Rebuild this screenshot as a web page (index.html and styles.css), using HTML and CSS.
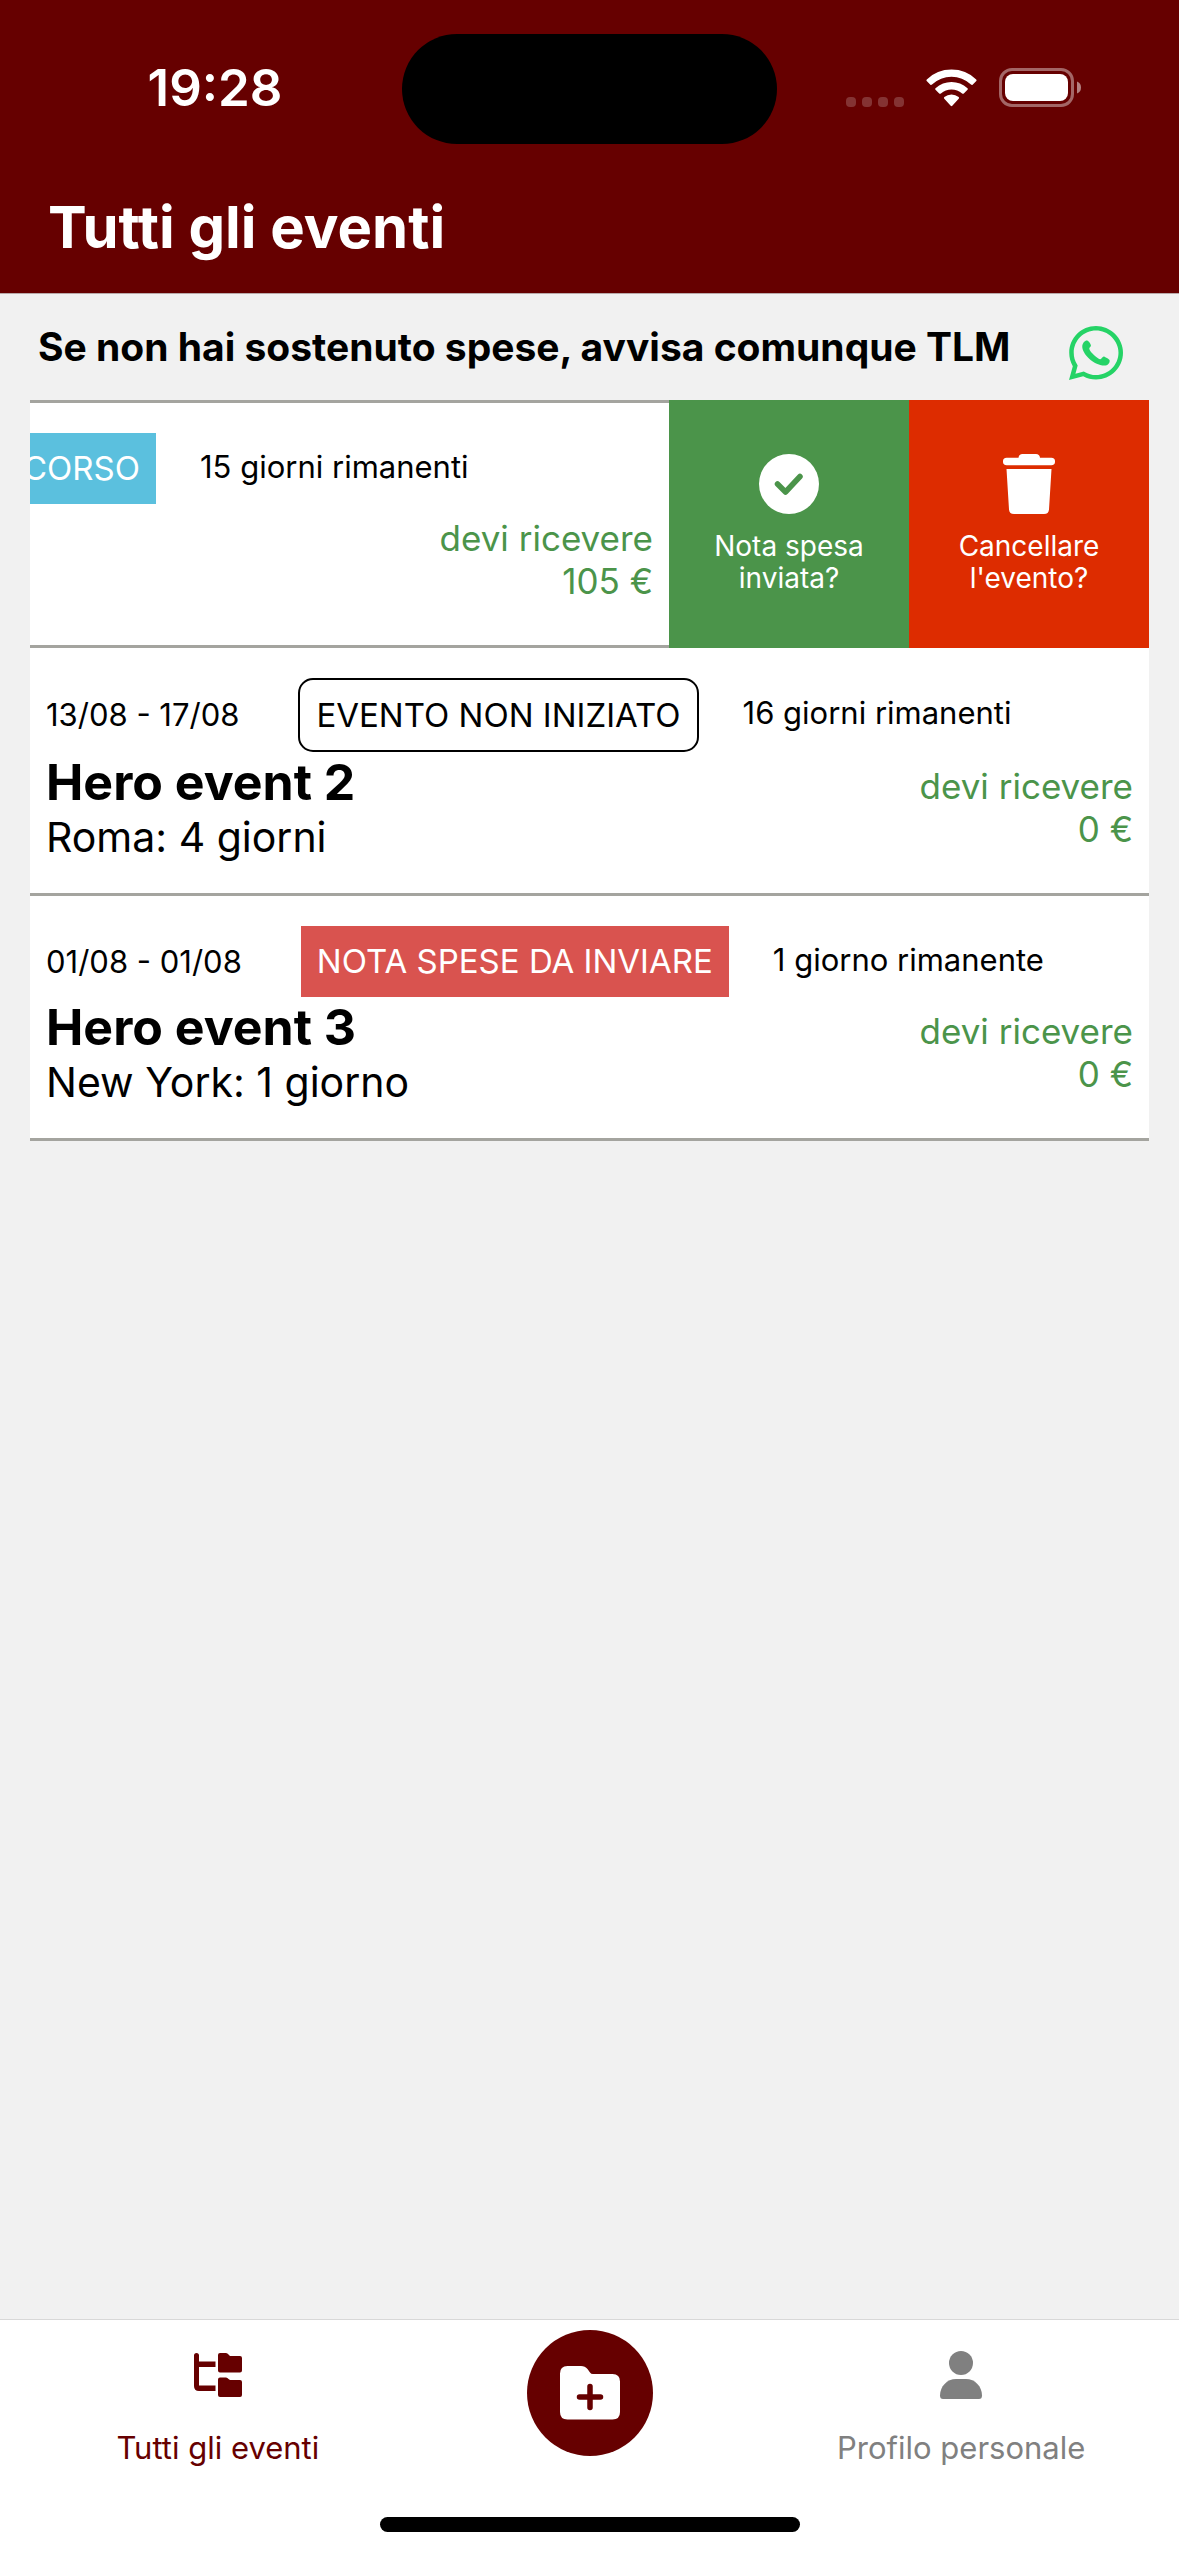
FILE: index.html
```html
<!DOCTYPE html>
<html lang="it">
<head>
<meta charset="utf-8">
<meta name="viewport" content="width=device-width, initial-scale=1">
<title>Tutti gli eventi</title>
<link rel="stylesheet" href="styles.css">
</head>
<body>
<header class="header">
  <div class="status">
    <time class="clock">19:28</time>
    <div class="island"></div>
    <div class="indicators">
      <svg width="58" height="10" viewBox="0 0 58 10" fill="#fff" fill-opacity=".2" aria-hidden="true">
        <rect width="10" height="10" rx="4"/><rect x="16" width="10" height="10" rx="4"/><rect x="32" width="10" height="10" rx="4"/><rect x="48" width="10" height="10" rx="4"/>
      </svg>
      <svg class="wifi" width="51" height="38" viewBox="0 0 51 38" fill="#fff" aria-hidden="true">
        <path d="M0.8 10.4Q11 0.5 25.500.5Q40 0.500 50.200 10.400Q51 11.200 50.300 12L46.600 15.700Q45.900 16.300 45 15.600Q36.500 7.800 25.500 7.800Q14.500 7.800 6 15.600Q5.100 16.300 4.400 15.700L0.700 12Q0 11.200 .8 10.400Z"/>
        <path d="M9.500 19.200Q16.500 13 25.500 13Q34.500 13 41.500 19.200Q42.300 20 41.500 20.800L37.800 24.500Q37 25.200 36.100 24.500Q31.500 20.500 25.500 20.500Q19.500 20.500 14.900 24.500Q14 25.200 13.200 24.500L9.500 20.800Q8.700 20 9.500 19.200Z"/>
        <path d="M18.300 28.100Q21.500 25.600 25.500 25.600Q29.500 25.600 32.700 28.100Q33.500 29 32.700 29.800L26.300 36.800Q25.500 37.500 24.700 36.800L18.300 29.800Q17.500 29 18.300 28.100Z"/>
      </svg>
      <svg width="83" height="39" viewBox="0 0 83 39" fill="#fff" aria-hidden="true">
        <rect x="1.500" y="1.500" width="72" height="36" rx="11.500" fill="none" stroke="#fff" stroke-opacity=".4" stroke-width="3"/>
        <rect x="6" y="6" width="63" height="27" rx="8"/>
        <path d="M78 13.500Q82 15 82 19.500Q82 24 78 25.500Z" fill-opacity=".5"/>
      </svg>
    </div>
  </div>
  <h1 class="title">Tutti gli eventi</h1>
</header>

<main class="main">
  <div class="notice">
    <p class="notice-text">Se non hai sostenuto spese, avvisa comunque TLM</p>
    <a class="whatsapp" href="#whatsapp" aria-label="WhatsApp">
      <svg width="54" height="54" viewBox="0 32 448 448" fill="#25d366" aria-hidden="true">
        <path d="M380.900 97.100C339 55.100 283.200 32 223.900 32c-122.400 0-222 99.600-222 222 0 39.100 10.200 77.300 29.600 111L0 480l117.700-30.900c32.400 17.700 68.900 27 106.100 27h.1c122.300 0 224.100-99.600 224.100-222 0-59.300-25.200-115-67.100-157zm-157 341.600c-33.200 0-65.700-8.900-94-25.700l-6.700-4-69.800 18.300L72 359.200l-4.400-7c-18.500-29.400-28.200-63.300-28.200-98.200 0-101.700 82.800-184.500 184.600-184.500 49.300 0 95.600 19.200 130.400 54.100 34.800 34.900 56.200 81.200 56.100 130.500 0 101.800-84.900 184.600-186.600 184.600z"/>
        <path d="M150 152C135 150 112 170 110 200C108 260 200 360 295 360C320 360 340 342 337 316C335 308 295 286 288 286C278 286 270 308 260 308C240 305 175 250 168 220C168 212 184 202 182 192C180 182 164 154 150 152Z"/>
      </svg>
    </a>
  </div>

  <ul class="events">
    <li class="swipe">
      <article class="event event-open">
        <div class="event-head">
          <div class="clip"><span class="badge badge-info">IN CORSO</span></div>
          <span class="left">15 giorni rimanenti</span>
        </div>
        <div class="event-body">
          <p class="amount">devi ricevere<br>105 €</p>
        </div>
      </article>
      <button class="action action-done" type="button">
        <svg width="60" height="60" viewBox="0 0 60 60" aria-hidden="true"><circle cx="30" cy="30" r="30" fill="#fff"/><path d="M18.500 30L26.500 38L41 22.500" fill="none" stroke="#4b944a" stroke-width="5.500" stroke-linecap="round" stroke-linejoin="round"/></svg>
        <span>Nota spesa<br>inviata?</span>
      </button>
      <button class="action action-delete" type="button">
        <svg width="60" height="60" viewBox="0 0 60 60" fill="#fff" aria-hidden="true"><path d="M7.700 3.700H19.500Q20 0 23.500 0H37Q40.500 0 41 3.700H52.300A3.700 3.700 0 0 1 52.300 11.200H7.700A3.700 3.700 0 0 1 7.700 3.700ZM7.500 15H52.500L50 55.500Q49.600 60 45 60H15Q10.400 60 10 55.500Z"/></svg>
        <span>Cancellare<br>l'evento?</span>
      </button>
    </li>
    <li>
      <article class="event">
        <div class="event-head">
          <span class="date">13/08 - 17/08</span>
          <span class="badge badge-outline">EVENTO NON INIZIATO</span>
          <span class="left">16 giorni rimanenti</span>
        </div>
        <div class="event-body">
          <div>
            <h2 class="name">Hero event 2</h2>
            <p class="place">Roma: 4 giorni</p>
          </div>
          <p class="amount">devi ricevere<br>0 €</p>
        </div>
      </article>
    </li>
    <li>
      <article class="event">
        <div class="event-head">
          <span class="date">01/08 - 01/08</span>
          <span class="badge badge-danger">NOTA SPESE DA INVIARE</span>
          <span class="left">1 giorno rimanente</span>
        </div>
        <div class="event-body">
          <div>
            <h2 class="name">Hero event 3</h2>
            <p class="place">New York: 1 giorno</p>
          </div>
          <p class="amount">devi ricevere<br>0 €</p>
        </div>
      </article>
    </li>
  </ul>
</main>

<footer class="footer">
  <nav class="tabs">
    <a class="tab tab-active" href="#eventi">
      <svg width="54" height="54" viewBox="0 0 54 54" fill="currentColor" aria-hidden="true"><path d="M3 7.500A2.500 2.500 0 0 1 8 7.500V13.500H24.500V19H8V37.500H24.500V43H8Q3 43 3 38ZM29 5H35Q36.500 5 37.500 6.500L39 8H49Q51 8 51 10V22.500Q51 24.500 49 24.500H29Q27 24.500 27 22.500V7Q27 5 29 5ZM29 29.500H35Q36.500 29.500 37.500 31L39 32H49Q51 32 51 34V47Q51 49 49 49H29Q27 49 27 47V31.500Q27 29.500 29 29.500Z"/></svg>
      <span>Tutti gli eventi</span>
    </a>
    <a class="tab" href="#nuovo" aria-label="Nuovo evento">
      <span class="add">
        <svg width="60" height="54" viewBox="0 0 60 54" aria-hidden="true"><path d="M7.500 0H21Q25 0 27.500 3L30 6.500Q31 8 33 8H52.500Q60 8 60 15.500V46Q60 53.500 52.500 53.500H7.500Q0 53.500 0 46V7.500Q0 0 7.500 0Z" fill="#fff"/><path d="M30 20.500V41.500M19.500 31H40.500" stroke="#600" stroke-width="5.500" stroke-linecap="round"/></svg>
      </span>
    </a>
    <a class="tab" href="#profilo">
      <svg width="54" height="54" viewBox="0 0 54 54" fill="currentColor" aria-hidden="true"><circle cx="27" cy="15" r="12"/><path d="M22 31H32C41 31 48 38.500 48 47.500Q48 51 45 51H9Q6 51 6 47.500C6 38.500 13 31 22 31Z"/></svg>
      <span>Profilo personale</span>
    </a>
  </nav>
  <div class="home"></div>
</footer>
</body>
</html>
```
FILE: styles.css
```css
* { box-sizing: border-box; margin: 0; padding: 0; }

body {
  display: flex;
  flex-direction: column;
  min-height: 100vh;
  background: #f1f1f1;
  color: #000;
  font-family: Inter, "Liberation Sans", sans-serif;
}

.header {
  padding-top: 34px;
  background: #600;
  color: #fff;
  border-bottom: 1px solid #b9a9a9;
}
.status {
  display: grid;
  grid-template-columns: 1fr 375px 1fr;
  align-items: center;
  height: 110px;
}
.clock { padding: 0 0 3px 28px; text-align: center; font-size: 51px; line-height: 60px; font-weight: 600; }
.island { height: 110px; border-radius: 55px; background: #000; }
.indicators { display: flex; align-items: flex-end; gap: 22px; padding: 0 0 3px 69px; }
.title { padding: 48px 48px 31px; font-size: 58px; line-height: 70px; font-weight: 700; }

.main { flex: 1; padding: 0 30px; }
.notice {
  display: flex;
  align-items: center;
  justify-content: space-between;
  height: 106px;
  padding: 0 26px 0 8px;
}
.notice-text { font-size: 39px; line-height: 46px; font-weight: 700; }
.whatsapp { display: flex; padding-top: 12px; }

.events { list-style: none; border-top: 3px solid #a4a49f; background: #fff; }
.event { padding: 30px 16px 31px; border-bottom: 3px solid #a4a49f; }
.event-head { display: flex; align-items: center; }
.date { margin-right: 59px; font-size: 31px; line-height: 36px; }
.badge { padding: 16px; font-size: 33px; line-height: 39px; white-space: nowrap; }
.badge-info { background: #5bc0de; color: #fff; }
.badge-danger { background: #d9534f; color: #fff; }
.badge-outline { padding: 16px 16px 15px; border: 2px solid #000; border-radius: 15px; }
.left { margin-left: 44px; font-size: 31px; line-height: 36px; padding-bottom: 4px; }
.event-body { display: flex; align-items: flex-start; justify-content: space-between; min-height: 110px; }
.name { font-size: 50px; line-height: 60px; font-weight: 700; }
.place { font-size: 41px; line-height: 50px; }
.amount { margin-left: auto; padding-top: 13px; color: #4b944a; font-size: 35px; line-height: 43px; text-align: right; }

/* First row is swiped open: its content slides off to the left. */
.swipe { display: flex; margin-top: -3px; }
.event-open { flex: 1; padding-left: 0; border-top: 3px solid #a4a49f; }
.clip { display: flex; justify-content: flex-end; width: 126px; overflow: hidden; }
.action {
  display: flex;
  flex-direction: column;
  align-items: center;
  gap: 16px;
  width: 240px;
  padding: 54px 0 0;
  border: 0;
  color: #fff;
  font: 28px/32px Inter, "Liberation Sans", sans-serif;
}
.action-done { background: #4b944a; }
.action-delete { background: #dd2c00; }

.footer { background: #fff; border-top: 1px solid #d8d8d8; padding-bottom: 24px; }
.tabs { display: flex; padding: 10px 32px 0; height: 197px; }
.tab {
  flex: 1;
  display: flex;
  flex-direction: column;
  align-items: center;
  gap: 28px;
  padding-top: 18px;
  color: #808080;
  font-size: 31px;
  line-height: 36px;
  text-decoration: none;
}
.tab-active { color: #600; }
.add {
  display: flex;
  align-items: center;
  justify-content: center;
  width: 126px;
  height: 126px;
  margin-top: -18px;
  border-radius: 50%;
  background: #600;
}
.home { width: 420px; height: 15px; margin: 0 auto; border-radius: 8px; background: #000; }
```
